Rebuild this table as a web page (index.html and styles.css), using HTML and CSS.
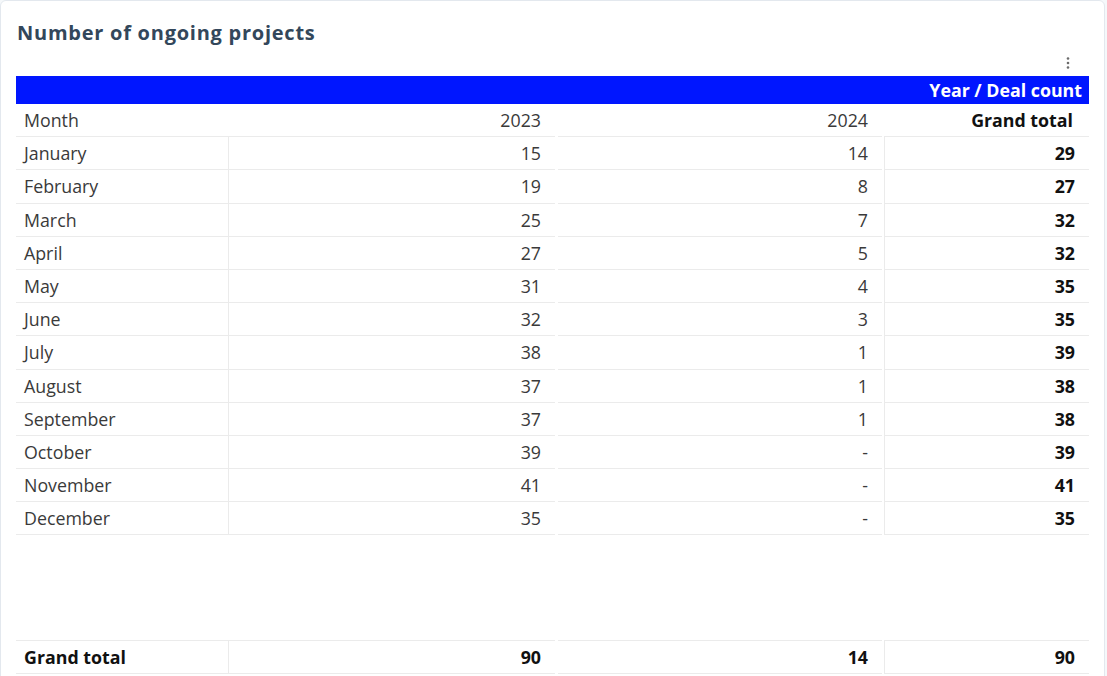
FILE: index.html
```html
<!DOCTYPE html>
<html lang="en">
<head>
<meta charset="utf-8">
<title>Number of ongoing projects</title>
<link rel="stylesheet" href="styles.css">
</head>
<body>
<div class="card">
  <h2 class="title">Number of ongoing projects</h2>
  <div class="toolbar">
    <svg class="dots" width="4" height="14" viewBox="0 0 4 14" aria-hidden="true">
      <circle cx="2" cy="2.5" r="1.3"/>
      <circle cx="2" cy="7" r="1.3"/>
      <circle cx="2" cy="11.5" r="1.3"/>
    </svg>
  </div>
  <div class="pivot">
    <div class="bar">Year / Deal count</div>
    <div class="row head">
      <div class="cell month">Month</div>
      <div class="cell y23 num">2023</div>
      <div class="cell y24 num">2024</div>
      <div class="cell gt num bold">Grand total</div>
    </div>
    <div class="row body"><div class="cell month">January</div><div class="cell y23 num">15</div><div class="cell y24 num">14</div><div class="cell gt num bold">29</div></div>
    <div class="row body"><div class="cell month">February</div><div class="cell y23 num">19</div><div class="cell y24 num">8</div><div class="cell gt num bold">27</div></div>
    <div class="row body"><div class="cell month">March</div><div class="cell y23 num">25</div><div class="cell y24 num">7</div><div class="cell gt num bold">32</div></div>
    <div class="row body"><div class="cell month">April</div><div class="cell y23 num">27</div><div class="cell y24 num">5</div><div class="cell gt num bold">32</div></div>
    <div class="row body"><div class="cell month">May</div><div class="cell y23 num">31</div><div class="cell y24 num">4</div><div class="cell gt num bold">35</div></div>
    <div class="row body"><div class="cell month">June</div><div class="cell y23 num">32</div><div class="cell y24 num">3</div><div class="cell gt num bold">35</div></div>
    <div class="row body"><div class="cell month">July</div><div class="cell y23 num">38</div><div class="cell y24 num">1</div><div class="cell gt num bold">39</div></div>
    <div class="row body"><div class="cell month">August</div><div class="cell y23 num">37</div><div class="cell y24 num">1</div><div class="cell gt num bold">38</div></div>
    <div class="row body"><div class="cell month">September</div><div class="cell y23 num">37</div><div class="cell y24 num">1</div><div class="cell gt num bold">38</div></div>
    <div class="row body"><div class="cell month">October</div><div class="cell y23 num">39</div><div class="cell y24 num">-</div><div class="cell gt num bold">39</div></div>
    <div class="row body"><div class="cell month">November</div><div class="cell y23 num">41</div><div class="cell y24 num">-</div><div class="cell gt num bold">41</div></div>
    <div class="row body"><div class="cell month">December</div><div class="cell y23 num">35</div><div class="cell y24 num">-</div><div class="cell gt num bold">35</div></div>
    <div class="spacer"></div>
    <div class="row body total">
      <div class="cell month bold">Grand total</div>
      <div class="cell y23 num bold">90</div>
      <div class="cell y24 num bold">14</div>
      <div class="cell gt num bold">90</div>
    </div>
  </div>
</div>
</body>
</html>
```

FILE: styles.css
```css
html, body {
  margin: 0;
  padding: 0;
}
body {
  background: #f5f8fa;
  font-family: "Open Sans", "Liberation Sans", sans-serif;
}
.card {
  box-sizing: border-box;
  width: 1105px;
  min-height: 700px;
  background: #ffffff;
  border: 1px solid #e3e8ee;
  border-radius: 6px;
  padding: 15px 15px 0 15px;
}
.title {
  margin: 3px 0 0 1px;
  font-family: "Open Sans", "Liberation Sans", sans-serif;
  font-weight: 700;
  font-size: 20px;
  letter-spacing: 0.75px;
  line-height: 28px;
  color: #33475b;
}
.toolbar {
  display: flex;
  justify-content: flex-end;
  height: 29px;
  padding-right: 19px;
  align-items: center;
}
.dots {
  fill: #6b6b6b;
  margin-top: 2px;
}
.pivot {
  width: 1073px;
}
.bar {
  background: #0016ff;
  color: #ffffff;
  font-weight: 700;
  font-size: 17.8px;
  height: 28px;
  line-height: 28px;
  text-align: right;
  padding-right: 7px;
}
.row {
  display: flex;
  height: 33.2px;
}
.cell {
  box-sizing: border-box;
  height: 33.2px;
  line-height: 33px;
  border-bottom: 1px solid #ebebeb;
  font-size: 17.8px;
  color: #3a3a3a;
  white-space: nowrap;
}
.month {
  width: 213px;
  padding-left: 8px;
}
.y23 {
  width: 326px;
}
.y24 {
  width: 324px;
  margin-left: 3px;
}
.gt {
  width: 205px;
  margin-left: 2px;
}
.num {
  text-align: right;
  padding-right: 14px;
}
.head .gt {
  padding-right: 16px;
}
.body .month {
  border-right: 1px solid #ebebeb;
}
.body .gt {
  border-left: 1px solid #ebebeb;
}
.bold {
  font-weight: 700;
  color: #111111;
}
.spacer {
  height: 105px;
}
.total .cell {
  border-top: 1px solid #ebebeb;
  line-height: 32px;
}
```
